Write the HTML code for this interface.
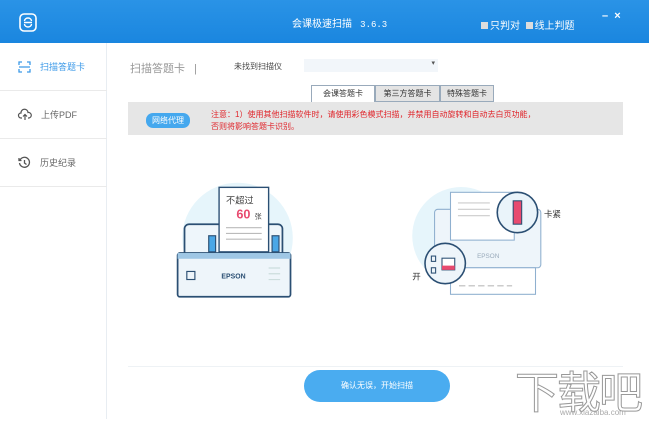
<!DOCTYPE html>
<html><head><meta charset="utf-8"><style>
*{margin:0;padding:0;box-sizing:border-box}
body{width:649px;height:419px;overflow:hidden;background:#fff;font-family:"Liberation Sans","Noto Sans CJK SC",sans-serif;position:relative;font-size:9px;color:#555}
.hdr{position:absolute;left:0;top:0;width:649px;height:43px;background:linear-gradient(#2a93e6,#1a86df);color:#fff}
.abs{position:absolute}
svg{overflow:visible}
.side{position:absolute;left:0;top:43px;width:107px;height:376px;border-right:1px solid #e8edf2;background:#fff}
.item{position:absolute;left:0;width:107px;height:48px;border-bottom:1px solid #eaeaea;display:flex;align-items:center;padding-left:18px;font-size:9px;color:#666}
.item svg{margin-right:9px}
.tab{position:absolute;top:85px;height:17px;border:1px solid #9ab;font-size:8px;color:#333;text-align:center;line-height:15px;background:#e4e4e4}
</style></head><body>
<div class="hdr">
 <svg class="abs" style="left:19px;top:13px" width="18" height="19" viewBox="0 0 18 19"><rect x="1" y="1" width="16" height="17" rx="4" fill="none" stroke="#fff" stroke-width="1.6"/><path d="M5 9.5h8M5.5 8a3.5 3 0 0 1 7 0M5.5 11a3.5 3 0 0 0 7 0" fill="none" stroke="#fff" stroke-width="1.4"/></svg>
 <div class="abs" style="left:292px;top:15px;font-size:10px">会课极速扫描 <span style="font-family:'Liberation Mono',monospace;font-size:9px">&nbsp;3.6.3</span></div>
 <div class="abs" style="left:481px;top:17px;font-size:10px"><span style="display:inline-block;width:7px;height:7px;background:#ddd;margin-right:2px"></span>只判对 &nbsp;<span style="display:inline-block;width:7px;height:7px;background:#ddd;margin-right:2px"></span>线上判题</div>
 <div class="abs" style="left:602px;top:10px;font-size:11px;font-weight:bold">– &nbsp;×</div>
</div>
<div class="side">
 <div class="item" style="top:0;color:#3d9ae8"><svg width="13" height="12" viewBox="0 0 13 12" fill="none" stroke="#3d9ae8" stroke-width="1.3"><path d="M1 4V1h3M9 1h3v3M12 8v3H9M4 11H1V8M1 6h11"/></svg>扫描答题卡</div>
 <div class="item" style="top:48px"><svg width="14" height="12" viewBox="0 0 14 12" fill="none" stroke="#555" stroke-width="1.2"><path d="M4 9H3a2.5 2.5 0 0 1 0-5 3.5 3.5 0 0 1 7-.5 2.5 2.5 0 0 1 1 5.5h-1M7 11V6M5 7.5L7 5.5 9 7.5"/></svg>上传PDF</div>
 <div class="item" style="top:96px"><svg width="13" height="13" viewBox="0 0 13 13" fill="none" stroke="#555" stroke-width="1.3"><path d="M2 4A5 5 0 1 1 1.5 7M1 2v2.5h2.5M6.5 4v3l2 1.5"/></svg>历史纪录</div>
</div>
<div class="abs" style="left:130px;top:60px;font-size:11px;color:#999">扫描答题卡 &nbsp;&nbsp;|</div>
<div class="abs" style="left:234px;top:61px;font-size:8px;color:#444">未找到扫描仪</div>
<div class="abs" style="left:304px;top:59px;width:134px;height:13px;background:#f2f6fa;font-size:7px;text-align:right;padding-right:3px">▾</div>
<div class="tab" style="left:311px;width:64px;background:#fff;border-bottom:none;z-index:2">会课答题卡</div>
<div class="tab" style="left:375px;width:65px">第三方答题卡</div>
<div class="tab" style="left:440px;width:54px">特殊答题卡</div>
<div class="abs" style="left:128px;top:102px;width:495px;height:33px;background:#e6e6e6"></div>
<div class="abs" style="left:146px;top:113px;width:44px;height:15px;border-radius:7px;background:#45a8ee;color:#fff;font-size:8px;text-align:center;line-height:15px">网络代理</div>
<div class="abs" style="left:211px;top:109px;font-size:8px;color:#e0242a;line-height:12px">注意：1）使用其他扫描软件时，请使用彩色模式扫描，并禁用自动旋转和自动去白页功能，<br>否则将影响答题卡识别。</div>
<!-- left illustration -->
<svg class="abs" style="left:173px;top:178px" width="144" height="127" viewBox="0 0 125 110">
 <circle cx="56" cy="52" r="48" fill="#e6f5fb"/>
 <rect x="10" y="40" width="85" height="40" rx="4" fill="#eef6fb" stroke="#2b4f73" stroke-width="1.5"/>
 <rect x="40" y="8" width="43" height="56" fill="#fff" stroke="#2b4f73" stroke-width="1.2"/>
 <text x="46" y="22" font-size="8" fill="#444" font-family="Noto Sans CJK SC">不超过</text>
 <text x="55" y="35" font-size="11" font-weight="bold" fill="#e84a6f" font-family="Liberation Sans">60</text>
 <text x="71" y="35" font-size="6" fill="#444" font-family="Noto Sans CJK SC">张</text>
 <path d="M46 43h31M46 48h31M46 53h31" stroke="#bbb"/>
 <rect x="31" y="50" width="6" height="14" fill="#4aa7e6" stroke="#2b4f73"/>
 <rect x="86" y="50" width="6" height="14" fill="#4aa7e6" stroke="#2b4f73"/>
 <rect x="4" y="65" width="98" height="38" rx="2" fill="#eef5fa" stroke="#2b4f73" stroke-width="1.5"/>
 <rect x="4" y="65" width="98" height="5" fill="#9fc7e5"/>
 <rect x="12" y="81" width="7" height="7" fill="none" stroke="#2b4f73"/>
 <text x="42" y="87" font-size="6" font-weight="bold" fill="#2b4f73" font-family="Liberation Sans">EPSON</text>
 <path d="M83 78h10M83 83h10M83 88h10" stroke="#cdd"/>
</svg>
<!-- right illustration -->
<svg class="abs" style="left:408px;top:188px" width="170" height="117" viewBox="0 0 160 110">
 <circle cx="50" cy="45" r="46" fill="#e6f5fb"/>
 <rect x="25" y="20" width="100" height="55" rx="3" fill="#eef5fa" stroke="#8fb0cf"/>
 <rect x="40" y="4" width="60" height="45" fill="#fff" stroke="#8fb0cf"/>
 <path d="M47 14h30M47 20h30M47 26h30" stroke="#ccc"/>
 <text x="65" y="66" font-size="6" fill="#9ab" font-family="Liberation Sans">EPSON</text>
 <rect x="40" y="75" width="80" height="25" fill="#fff" stroke="#8fb0cf"/>
 <path d="M48 92h50" stroke="#bbb" stroke-dasharray="6 3"/>
 <circle cx="103" cy="23" r="19" fill="#eaf4fa" stroke="#2b4f73" stroke-width="1.5"/>
 <rect x="99" y="12" width="8" height="22" fill="#e84a6f" stroke="#2b4f73"/>
 <circle cx="35" cy="71" r="19" fill="#eef5fa" stroke="#2b4f73" stroke-width="1.5"/>
 <rect x="22" y="64" width="4" height="5" fill="none" stroke="#2b4f73"/><rect x="22" y="75" width="4" height="5" fill="none" stroke="#2b4f73"/>
 <rect x="32" y="66" width="12" height="11" fill="#fff" stroke="#2b4f73"/><rect x="32" y="73" width="12" height="4" fill="#e84a6f"/>
 <text x="128" y="27" font-size="8" fill="#333" font-family="Noto Sans CJK SC">卡紧</text>
 <text x="4" y="86" font-size="8" fill="#333" font-family="Noto Sans CJK SC">开</text>
</svg>
<div class="abs" style="left:128px;top:366px;width:495px;height:1px;background:#eef2f5"></div>
<div class="abs" style="left:304px;top:370px;width:146px;height:32px;border-radius:16px;background:#4aacf0;color:#fff;font-size:8px;text-align:center;line-height:32px">确认无误，开始扫描</div>
<div class="abs" style="left:515px;top:365px;font-size:44px;color:#fff;-webkit-text-stroke:1px #999;font-family:'Noto Sans CJK SC',sans-serif;line-height:48px;letter-spacing:-2px">下载吧</div>
<div class="abs" style="left:560px;top:408px;font-size:8px;color:#aaa">www.xiazaiba.com</div>
</body></html>
